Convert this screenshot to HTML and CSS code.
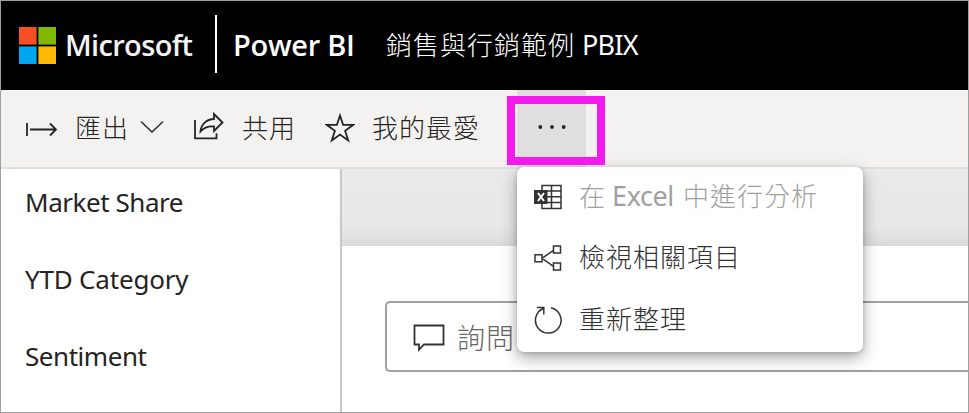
FILE: index.html
```html
<!DOCTYPE html>
<html lang="zh-Hant">
<head>
<meta charset="utf-8">
<title>Power BI</title>
<link rel="stylesheet" href="styles.css">
</head>
<body>
<div class="app">
  <header class="header">
    <svg class="logo" width="37" height="37" viewBox="0 0 37 37"><path fill="#f65022" d="M0 0h17.6v17.6H0z"/><path fill="#7fba00" d="M19.4 0H37v17.6H19.4z"/><path fill="#00a4ef" d="M0 19.4h17.6V37H0z"/><path fill="#ffb900" d="M19.4 19.4H37V37H19.4z"/></svg>
    <span class="brand">Microsoft</span>
    <span class="divider"></span>
    <span class="product">Power BI</span>
    <span class="report"><span class="cjk">銷售與行銷範例</span><span class="pbix">PBIX</span></span>
  </header>
  <nav class="toolbar">
    <button class="tool export">
      <svg class="arrow" width="32" height="16" viewBox="0 0 32 16" fill="none" stroke="#252423" stroke-width="1.8"><path d="M1 1v13M4 7.5h26M24 1.5l6 6-6 6"/></svg>
      <span class="cjk">匯出</span>
      <svg class="chevron" width="24" height="14" viewBox="0 0 24 14" fill="none" stroke="#252423" stroke-width="1.3"><path d="M1 1.5l11 10.5L23 1.5"/></svg>
    </button>
    <button class="tool share">
      <svg width="32" height="28" viewBox="0 0 32 28" fill="none" stroke="#252423" stroke-width="1.8"><path d="M2 8v18.300h21.500v-5M21 2l8.500 8.500L21 19v-4.500c-6-.5-10 1-13.500 5C8 12 13.500 7.300 21 7z"/></svg>
      <span class="cjk">共用</span>
    </button>
    <button class="tool favorite">
      <svg width="30" height="30" viewBox="0 0 30 30" fill="none" stroke="#252423" stroke-width="1.8"><path d="M15 2.500l3.100 9.300h10.200l-8.200 6 3.100 9.700-8.200-6-8.200 6 3.100-9.700-8.200-6h10.200z"/></svg>
      <span class="cjk">我的最愛</span>
    </button>
    <button class="more">
      <svg class="dots" width="30" height="6" viewBox="0 0 30 6" fill="#252423"><circle cx="3.300" cy="3" r="1.900"/><circle cx="15" cy="3" r="1.900"/><circle cx="26.700" cy="3" r="1.900"/></svg>
      <span class="highlight"></span>
      <span class="menu">
        <span class="item disabled">
          <svg width="28" height="26" viewBox="0 0 28 26" fill="none"><path d="M8 1.500h19v23H8zM8 7h19M8 12.700h19M8 18.500h19M17.500 1.500v23" stroke="#333" stroke-width="1.500"/><path d="M0 6h13.500v14H0z" fill="#333"/><path d="M4 9l6 8M10 9l-6 8" stroke="#fff" stroke-width="2"/></svg>
          <span class="text"><span class="cjk">在</span><span class="excel">Excel</span><span class="cjk">中進行分析</span></span>
        </span>
        <span class="item">
          <svg width="28" height="26" viewBox="0 0 28 26" fill="none" stroke="#333" stroke-width="1.500"><path d="M1 9.800h7v7H1zM19.500 1h7v7h-7zM19.500 18h7v7h-7zM8 13.300l11.500-8M8 13.300l11.500 8"/></svg>
          <span class="text cjk">檢視相關項目</span>
        </span>
        <span class="item">
          <svg width="28" height="28" viewBox="0 0 28 28" fill="none" stroke="#333" stroke-width="1.500"><path d="M9.300 2.500A12.800 12.800 0 1 0 17 1.800M2.800 1.500h7v7"/></svg>
          <span class="text cjk">重新整理</span>
        </span>
      </span>
    </button>
  </nav>
  <div class="content">
    <aside class="pages">
      <span class="page p1">Market Share</span>
      <span class="page p2">YTD Category</span>
      <span class="page p3">Sentiment</span>
    </aside>
    <main class="canvas">
      <section class="sheet">
        <div class="question">
          <svg width="32" height="28" viewBox="0 0 32 28" fill="none" stroke="#333" stroke-width="1.800"><path d="M1.500 1.500h29v19H11l-5 5.200v-5.200H1.500z"/></svg>
          <span class="cjk">詢問</span>
        </div>
      </section>
    </main>
  </div>
</div>
</body>
</html>
```

FILE: styles.css
```css
* { box-sizing: border-box; }
body { margin: 0; font-family: "Noto Sans", "Noto Sans CJK TC", sans-serif; color: #252423; }
svg { flex: none; display: block; }
.app { width: 969px; height: 413px; border: 1px solid #a0a0a0; overflow: hidden; display: flex; flex-direction: column; background: #fff; }
.cjk { font-family: "Noto Sans CJK TC", sans-serif; font-weight: 300; font-size: 26px; letter-spacing: 1px; line-height: 36px; padding-bottom: 4px; white-space: nowrap; }

.header { height: 89px; flex: none; background: #000; color: #fff; display: flex; align-items: center; padding: 0 0 2px 18px; white-space: nowrap; }
.logo { margin-top: 1px; }
.brand { margin-left: 9px; width: 150px; font-family: "Open Sans", sans-serif; font-weight: 600; font-size: 29px; letter-spacing: -0.65px; color: #f3f3f3; }
.divider { width: 2px; height: 58px; background: #fff; margin-top: -1px; }
.product { margin-left: 16px; width: 153px; font-family: "Open Sans", sans-serif; font-weight: 600; font-size: 29px; letter-spacing: -0.3px; }
.report { display: flex; align-items: center; }
.report .cjk { padding-bottom: 2px; }
.pbix { margin-left: 7px; font-size: 27px; line-height: 36px; letter-spacing: -0.8px; }

.toolbar { height: 79px; flex: none; background: #f3f2f1; border-bottom: 2px solid #e1dfdd; display: flex; align-items: stretch; padding-left: 25px; }
button { border: 0; background: none; padding: 0; color: inherit; text-align: left; font-family: inherit; }
.tool { display: flex; align-items: center; }
.export { width: 167px; }
.arrow { margin-top: 2px; }
.export .cjk { margin-left: 17px; }
.chevron { margin: -3px 0 0 11px; }
.share { width: 132px; }
.share .cjk { margin-left: 17px; }
.share svg { margin-top: -5px; }
.favorite { width: 192px; }
.favorite svg { margin-top: -2px; }
.favorite .cjk { margin-left: 17px; }
.more { width: 69px; background: #e1dfdd; display: flex; align-items: center; justify-content: center; position: relative; }
.dots { margin-top: -3px; }
.highlight { position: absolute; left: -10px; top: 6px; width: 98px; height: 69px; border: 8px solid #f319ef; z-index: 3; }
.menu { position: absolute; z-index: 2; left: 0; top: 77px; width: 346px; height: 185px; display: grid; grid-template-rows: repeat(3, 1fr); border-radius: 7px; background: #fff; box-shadow: 0 6px 16px rgba(0,0,0,.34), 0 1px 4px rgba(0,0,0,.16); }
.item { display: flex; align-items: center; padding: 0 0 2px 17px; color: #333; }
.text { margin-left: 17px; }
.disabled .text { display: flex; align-items: center; color: #a19f9d; }
.excel { margin: 0 9px 0 6px; padding-bottom: 2px; font-size: 27px; line-height: 36px; letter-spacing: -0.4px; }

.content { flex: 1; display: flex; min-height: 0; }
.pages { width: 341px; flex: none; border-right: 2px solid #c8c8c8; padding: 15px 0 0 24px; display: flex; flex-direction: column; gap: 41px; }
.page { font-size: 26px; line-height: 36px; letter-spacing: -0.45px; }
.p2 { letter-spacing: -0.2px; }
.canvas { flex: 1; background: linear-gradient(#eaeaea 0, #e8e8e8 58px, #dadada 77px); padding-top: 77px; min-width: 0; }
.sheet { height: 166px; background: #fff; padding: 55px 0 0 43px; }
.question { height: 71px; border: 2px solid #a0a0a0; border-right: 0; border-radius: 5px 0 0 5px; display: flex; align-items: center; padding-left: 26px; }
.question svg { margin-top: 2px; }
.question .cjk { margin-left: 12px; padding: 0; color: #666; font-size: 28px; }
```
